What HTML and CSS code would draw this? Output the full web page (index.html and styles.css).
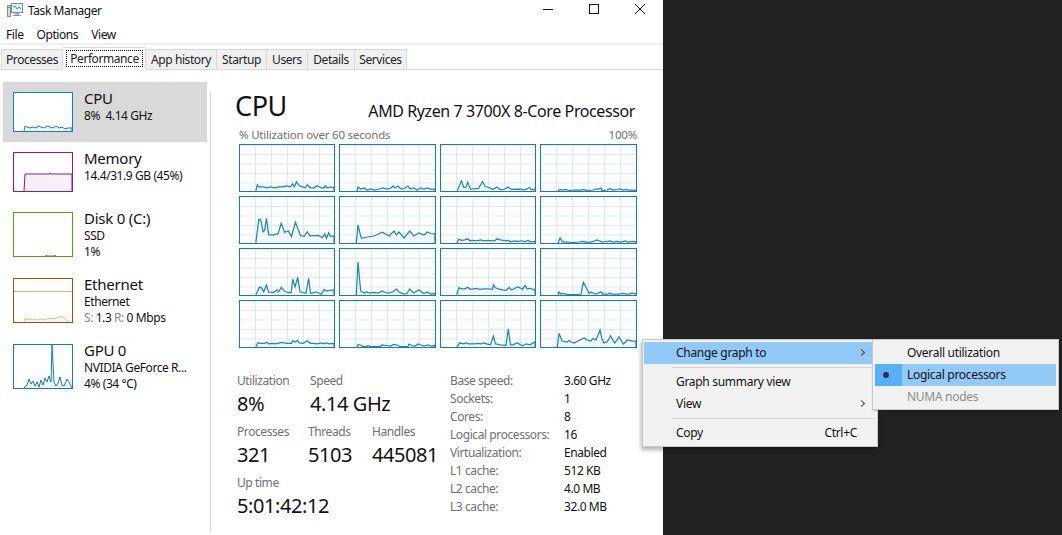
FILE: index.html
```html
<!DOCTYPE html>
<html lang="en">
<head>
  <meta charset="UTF-8" />
  <title>Task Manager</title>
  <link rel="stylesheet" href="styles.css">
</head>
<body>

<div class="window">
  <div class="titlebar">
    <svg class="app-icon" width="16" height="16" viewBox="0 0 16 16">
      <rect x="0.5" y="3.5" width="3" height="11" fill="#d4d8db" stroke="#858d94"/>
      <rect x="1" y="5" width="2" height="1" fill="#5fae4a"/>
      <rect x="4.5" y="1.5" width="11" height="9" fill="#e4f1fa" stroke="#7f8c96"/>
      <polyline points="6,5 8,4 10,7 12,5 14,7" fill="none" stroke="#2f8fd0"/>
      <rect x="8" y="11" width="4" height="2" fill="#a9b2b9"/>
      <rect x="6" y="13" width="8" height="1" fill="#8a949c"/>
    </svg>
    <span class="title">Task Manager</span>
    <div class="controls">
      <svg width="46" height="20" viewBox="0 0 46 20"><line x1="18" y1="9.5" x2="28" y2="9.5" stroke="#111"/></svg>
      <svg width="46" height="20" viewBox="0 0 46 20"><rect x="18.5" y="4.5" width="9" height="9" fill="none" stroke="#111"/></svg>
      <svg width="46" height="20" viewBox="0 0 46 20"><path d="M18 4 L28 14 M28 4 L18 14" stroke="#111" fill="none"/></svg>
    </div>
  </div>

  <div class="menubar">
    <span>File</span>
    <span>Options</span>
    <span>View</span>
  </div>

  <div class="tabs">
    <div class="tab t-processes">Processes</div>
    <div class="tab tab-active"><span class="focus">Performance</span></div>
    <div class="tab t-app">App history</div>
    <div class="tab t-startup">Startup</div>
    <div class="tab t-users">Users</div>
    <div class="tab t-details">Details</div>
    <div class="tab t-services">Services</div>
  </div>

  <div class="content">
    <div class="sidebar">
      <div class="res res-active">
        <svg class="thumb thumb-blue" viewBox="0 0 58 38"><polyline points="10,38 11,33 13,34 16,35 19,34 22,35 24,33 27,34 30,35 33,33 36,34 39,35 42,33 45,35 48,34 51,36 54,35 58,35 58,38"/></svg>
        <div class="res-text">
          <div class="res-name">CPU</div>
          <div class="res-sub">8%&nbsp; 4.14 GHz</div>
        </div>
      </div>
      <div class="res">
        <svg class="thumb thumb-purple" viewBox="0 0 58 38"><polyline points="10,38 11,21 35,21 36,20 37,21 58,21 58,38"/></svg>
        <div class="res-text">
          <div class="res-name">Memory</div>
          <div class="res-sub">14.4/31.9 GB (45%)</div>
        </div>
      </div>
      <div class="res res-tall">
        <svg class="thumb thumb-h thumb-green" viewBox="0 0 58 43"><polyline points="32,43 32,42 33,43 41,43 41,42 42,43"/></svg>
        <div class="res-text">
          <div class="res-name">Disk 0 (C:)</div>
          <div class="res-sub">SSD</div>
          <div class="res-sub">1%</div>
        </div>
      </div>
      <div class="res res-tall">
        <svg class="thumb thumb-h thumb-orange" viewBox="0 0 58 43">
          <line class="eth-line" x1="0" y1="12.5" x2="58" y2="12.5"/>
          <polyline points="10,43 11,39 13,41 15,40 18,41 21,40 24,41 27,40 30,41 33,40 36,39 39,40 42,39 45,38 47,37 50,39 52,41 54,43"/>
        </svg>
        <div class="res-text">
          <div class="res-name">Ethernet</div>
          <div class="res-sub">Ethernet</div>
          <div class="res-sub"><span class="dim">S:</span> 1.3 <span class="dim">R:</span> 0 Mbps</div>
        </div>
      </div>
      <div class="res res-tall">
        <svg class="thumb thumb-h thumb-blue" viewBox="0 0 58 43"><polyline points="10,43 13,40 15,34 17,39 19,36 21,41 23,37 25,42 27,35 29,40 31,33 33,37 35,31 37,37 38,0 40,37 42,41 44,38 46,32 48,40 50,41 53,34 55,37 58,43"/></svg>
        <div class="res-text">
          <div class="res-name">GPU 0</div>
          <div class="res-sub">NVIDIA GeForce R...</div>
          <div class="res-sub">4% (34 °C)</div>
        </div>
      </div>
    </div>
    <div class="divider"></div>

    <div class="main">
      <div class="main-head">
        <h1>CPU</h1>
        <div class="cpu-model">AMD Ryzen 7 3700X 8-Core Processor</div>
      </div>
      <div class="axis">
        <span>% Utilization over 60 seconds</span>
        <span>100%</span>
      </div>

      <div class="graphs">
        <svg class="graph" viewBox="0 0 95 46"><polyline points="16,46 17.5,40 19,42 24,42 27,43 31,42 35,43 39,42 43,42 47,41 51,42 53,39 55,42 57,37 60,41 63,42 66,43 68,40 71,43 75,43 78,41 82,43 85,43 86,41 88,43 92,42 95,43 95,46"/></svg>
        <svg class="graph" viewBox="0 0 95 46"><polyline points="17,46 18,42 21,44 24,43 27,45 31,44 35,45 39,44 43,43 47,44 51,43 53,41 55,43 58,41 60,43 62,44 65,43 68,41 70,44 74,43 77,45 81,43 84,44 87,43 90,44 95,44 95,46"/></svg>
        <svg class="graph" viewBox="0 0 95 46"><polyline points="16.3,46 20.7,36 23,42.7 25,42.7 27,37.3 29.7,44.3 38,43.7 42,36.7 44.7,42 49,42.7 52.3,44.7 56.3,42.3 60.3,45 64,44.5 68,42.3 71.3,44.7 79.7,44.3 84.7,45 89.7,42.7 91.3,45 95,44.3 95,46"/></svg>
        <svg class="graph" viewBox="0 0 95 46"><polyline points="17,46 19,44.5 22,45 25,44.5 28,45.5 32,45 36,45 40,45 43,44.5 46,45.5 52,45 54,44 57,44 60,43 61,45.5 66,45 69,43.5 72,45 76,44.5 79,44 82,45 85,44.5 88,45 91,45 95,45.5 95,46"/></svg>

        <svg class="graph" viewBox="0 0 95 46"><polyline points="16,46 19,22.3 21,23 23.3,35 25,33 26.7,21.3 29,38 34,38 38.3,37 41.7,26.3 45,35.3 49,34 52,39.7 56,25.3 59,33 61,38.7 64.7,39.5 68,35 70.7,39 79,38.5 83.3,40.7 85.7,37 87.3,41.5 89.7,36 91.3,39.5 95,39 95,46"/></svg>
        <svg class="graph" viewBox="0 0 95 46"><polyline points="16.3,46 18,28 20.7,39 21.7,41.3 27.3,40 34,39 42.3,35.3 49,39 54,34 56.3,38 59,35 64,41 69.7,34 73.7,39 78.7,36 84,38 87.3,35 90.7,36.5 95,37 95,46"/></svg>
        <svg class="graph" viewBox="0 0 95 46"><polyline points="16,46 18,42.5 21,43.5 24,43 27,42 29,44 33,43.5 36,44 40,43 43,44 47,43.5 52,44 54,44 57,42 60,43 63,43.5 66,44 68,43.5 70,45 74,44 78,44.5 82,44 85,45 88,43.5 90,45 95,44.5 95,46"/></svg>
        <svg class="graph" viewBox="0 0 95 46"><polyline points="17,46 19,41 21,44 23,45 27,45 32,45.5 38,45 42,44.5 45,45 50,45 53,44 56,43 59,44 61,45 65,44.5 69,44 72,45 76,44.5 80,45 84,44 87,45 91,44.5 95,45 95,46"/></svg>

        <svg class="graph" viewBox="0 0 95 46"><polyline points="16,46 19.7,38.3 21.7,39 24,43 26.7,36.3 29,43.3 34,43.5 37.3,41 39,43 41.7,38.5 45.7,43 51.7,44 53.3,30.3 55.7,38 58.3,28.3 60.7,43 66.7,44.5 69.3,29.3 71.3,44.5 77.3,43 82,45.5 85,40.5 87,42 95,41 95,46"/></svg>
        <svg class="graph" viewBox="0 0 95 46"><polyline points="16.3,46 18,13 20.7,42 24,44 26.7,43 30,44 34,43.5 38,44 42.3,42 45,43.5 49,44 53,42.5 56.3,40 59,43 64,45 67,44.5 69.7,40 73.7,44 78.7,41 84,44.5 87.3,43 91,45 95,44.5 95,46"/></svg>
        <svg class="graph" viewBox="0 0 95 46"><polyline points="16,46 18,39 21,40 24,40 27,38.5 29.7,40.5 33,40 36,39.5 39,40.5 43,40 47,40 52,40.5 53,36 55,39 58,40 62,41 66,41.5 69,38.5 71,41 74,40 77,38 80,39 82.3,40.5 85,36.5 87,40 90,39.5 95,41 95,46"/></svg>
        <svg class="graph" viewBox="0 0 95 46"><polyline points="17,46 18,43 20,45 23,44.5 26,45.5 36,45.5 40,45 42.3,33.3 45,38 48,44.5 50,43 53,44.5 55,45 57,44 60,43 62,45 67,45 69,44 71,45 78,45 82,44.5 86,45 88,45 91,44 95,45 95,46"/></svg>

        <svg class="graph" viewBox="0 0 95 46"><polyline points="16,46 18,42 22,42.5 25,42.5 27,41.5 29,43 33,42.5 36,43 40,42 43,41.5 47,42.5 52,42.5 53,40 56,41 58,39.5 60,42 64,42.5 68,40 71,42.5 75,42.5 78,43 82,42 85,43 87,42 90,43 95,42.5 95,46"/></svg>
        <svg class="graph" viewBox="0 0 95 46"><polyline points="17,46 18,43.5 20,44 23,45.5 27,45.5 28,44.5 30,45.5 40,45.5 42,44 46,44.5 50,45 54,43.5 57,44 60,45.5 68,45.5 69,43 72,44.5 75,45 78,43 81,44 84,45 88,44 91,45 95,44.5 95,46"/></svg>
        <svg class="graph" viewBox="0 0 95 46"><polyline points="16,46 19,42 23,43 26,42 28,43 33,43 37,42.5 41,43 43,42 46,43 50,44 53,35 55,43 60,44 65.7,44.5 68,28 70.3,44 73,44 77,42 82,45 86,43 90,44 95,41 95,46"/></svg>
        <svg class="graph" viewBox="0 0 95 46"><polyline points="16.3,46 18,32.3 21,40 26,41 28,39.5 30,41 33,42 37,40 43,37 46,39 49.7,40 52,37.5 55,39 59,29 61,38 63,42 66,41 69.7,35 73.7,42 78,36 82.3,43 86.3,39 91.3,40 95,40 95,46"/></svg>
      </div>

      <div class="details">
        <div class="stats">
          <div class="stat-row">
            <div class="stat s-util"><div class="stat-label">Utilization</div><div class="stat-value">8%</div></div>
            <div class="stat"><div class="stat-label">Speed</div><div class="stat-value">4.14 GHz</div></div>
          </div>
          <div class="stat-row">
            <div class="stat s-proc"><div class="stat-label">Processes</div><div class="stat-value">321</div></div>
            <div class="stat s-thr"><div class="stat-label">Threads</div><div class="stat-value">5103</div></div>
            <div class="stat"><div class="stat-label">Handles</div><div class="stat-value">445081</div></div>
          </div>
          <div class="stat-row">
            <div class="stat"><div class="stat-label">Up time</div><div class="stat-value">5:01:42:12</div></div>
          </div>
        </div>

        <div class="specs">
          <span class="spec-key">Base speed:</span><span>3.60 GHz</span>
          <span class="spec-key">Sockets:</span><span>1</span>
          <span class="spec-key">Cores:</span><span>8</span>
          <span class="spec-key">Logical processors:</span><span>16</span>
          <span class="spec-key">Virtualization:</span><span>Enabled</span>
          <span class="spec-key">L1 cache:</span><span>512 KB</span>
          <span class="spec-key">L2 cache:</span><span>4.0 MB</span>
          <span class="spec-key">L3 cache:</span><span>32.0 MB</span>
        </div>
      </div>
    </div>
  </div>
</div>

<div class="menu menu-main">
  <div class="menu-item menu-hot"><span>Change graph to</span><span class="arrow"></span></div>
  <div class="menu-sep"></div>
  <div class="menu-item"><span>Graph summary view</span></div>
  <div class="menu-item"><span>View</span><span class="arrow"></span></div>
  <div class="menu-sep"></div>
  <div class="menu-item"><span>Copy</span><span class="shortcut">Ctrl+C</span></div>
</div>

<div class="menu menu-sub">
  <div class="sub-item"><span class="bullet-cell"></span><span>Overall utilization</span></div>
  <div class="sub-item sub-hot"><span class="bullet-cell"><i class="bullet"></i></span><span>Logical processors</span></div>
  <div class="sub-item sub-off"><span class="bullet-cell"></span><span>NUMA nodes</span></div>
</div>

</body>
</html>
```

FILE: styles.css
```css
* {
  box-sizing: border-box;
}

html,
body {
  height: 100%;
}

body {
  margin: 0;
  position: relative;
  overflow: hidden;
  background: #212121;
  color: #111;
  font-family: "Noto Sans", "Open Sans", sans-serif;
  font-size: 12px;
  letter-spacing: -0.42px;
}

.window {
  width: 663px;
  height: 535px;
  background: #fff;
}

/* title + menu */
.titlebar {
  display: flex;
  align-items: center;
  height: 22px;
  padding: 0 0 2px 7px;
}

.app-icon {
  margin-right: 5px;
}

.title {
  flex: 1;
}

.controls {
  display: flex;
}

.menubar {
  display: flex;
  gap: 13px;
  height: 23px;
  padding: 4px 0 0 6px;
  border-bottom: 2px solid #f0f0f0;
}

/* tabs */
.tabs {
  display: flex;
  align-items: flex-end;
  height: 25px;
  padding-left: 1px;
  border-bottom: 1px solid #d9d9d9;
}

.tab {
  height: 21px;
  margin-bottom: -1px;
  padding-top: 2px;
  line-height: 16px;
  text-align: center;
  background: #f0f0f0;
  border: 1px solid #d9d9d9;
  border-left: 0;
  color: #222;
}

.t-processes { width: 62px; border-left: 1px solid #d9d9d9; }
.t-app { width: 71px; }
.t-startup { width: 50px; }
.t-users { width: 41px; }
.t-details { width: 47px; }
.t-services { width: 52px; }

.tab-active {
  width: 83px;
  height: 23px;
  padding: 2px 2px 2px 3px;
  background: #fff;
  border-bottom-color: #fff;
}

.focus {
  display: block;
  height: 17px;
  line-height: 15px;
  border: 1px dotted #000;
}

/* left column */
.content {
  display: flex;
  padding-top: 12px;
}

.sidebar {
  width: 210px;
  padding-left: 3px;
}

.divider {
  width: 1px;
  height: 441px;
  margin-top: 10px;
  background: #d9d9d9;
}

.res {
  display: flex;
  width: 204px;
  height: 60px;
  padding: 10px 0 0 10px;
}

.res-tall {
  height: 66px;
}

.res-active {
  background: #d9d9d9;
}

.thumb {
  width: 60px;
  height: 40px;
  flex: none;
  border: 1px solid;
  background: #fff;
}

.thumb-h {
  height: 45px;
}

.thumb polyline {
  stroke-width: 1;
}

.thumb-blue { border-color: #117dbb; }
.thumb-blue polyline { fill: #f1f6fa; stroke: #117dbb; }
.thumb-purple { border-color: #8b12ae; }
.thumb-purple polyline { fill: #f4f2f4; stroke: #8b12ae; }
.thumb-green { border-color: #4da60c; }
.thumb-green polyline { fill: #eff7e8; stroke: #4da60c; }
.thumb-orange { border-color: #a74f01; }
.thumb-orange polyline { fill: #fdf8f3; stroke: #eeb48f; }

.eth-line {
  stroke: #dfac88;
}

.res-text {
  margin: -4px 0 0 11px;
}

.res-name {
  font-size: 15px;
  line-height: 20px;
  letter-spacing: -0.25px;
}

.res-sub {
  line-height: 16px;
  white-space: nowrap;
}

.dim {
  color: #888;
}

/* right column */
.main {
  width: 402px;
  padding: 7px 0 0 24px;
}

.main-head {
  display: flex;
  justify-content: space-between;
  align-items: flex-end;
  width: 400px;
  height: 33px;
}

h1 {
  margin: 0;
  font-size: 27px;
  font-weight: 400;
  line-height: 33px;
}

.cpu-model {
  font-size: 16px;
  line-height: 22px;
  letter-spacing: -0.4px;
}

.axis {
  display: flex;
  justify-content: space-between;
  width: 402px;
  height: 22px;
  padding: 6px 0 0 4px;
  line-height: 14px;
  font-size: 11.5px;
  color: #707070;
  letter-spacing: -0.2px;
}

.graphs {
  display: grid;
  grid-template-columns: 96px 97px 96px 97px;
  grid-auto-rows: 48px;
  gap: 4px;
  margin-left: 4px;
}

.graph {
  width: 100%;
  height: 48px;
  border: 1px solid #117dbb;
  background-color: #fff;
  background-image:
    linear-gradient(90deg, #d9eaf4 1px, transparent 1px),
    linear-gradient(#d9eaf4 1px, transparent 1px);
  background-size: 16px 100%, 100% 9.5px;
  background-position: 15px 0, 0 9px;
}

.graph polyline {
  fill: #f1f6fa;
  fill-opacity: 0.85;
  stroke: #1c84c0;
  stroke-width: 1.25;
}

.details {
  display: flex;
  margin-top: 25px;
}

.stats {
  width: 215px;
  padding-left: 2px;
}

.stat-row {
  display: flex;
  height: 51px;
}

.s-util { width: 73px; }
.s-proc { width: 71px; }
.s-thr { width: 64px; }

.stat-label {
  height: 17px;
  line-height: 16px;
  color: #707070;
}

.stat-value {
  font-size: 20px;
  line-height: 28px;
  white-space: nowrap;
}

.specs {
  display: grid;
  grid-template-columns: 114px 1fr;
  grid-auto-rows: 18px;
  line-height: 16px;
}

.spec-key {
  color: #707070;
}

/* context menu */
.menu {
  position: absolute;
  top: 339px;
  background: #f2f2f2;
  border: 1px solid #c8c8c8;
  letter-spacing: -0.3px;
}

.menu-main {
  left: 642px;
  width: 236px;
  height: 108px;
  padding: 2px 1px 0;
  box-shadow: -1px 3px 4px rgba(0, 0, 0, 0.3);
}

.menu-item {
  display: flex;
  justify-content: space-between;
  align-items: center;
  height: 22px;
  padding: 0 10px 1px 32px;
}

.menu-hot {
  background: #91c9f7;
}

.arrow {
  width: 5px;
  height: 5px;
  border-top: 1px solid #444;
  border-right: 1px solid #444;
  transform: rotate(45deg);
  margin-right: 2px;
}

.shortcut {
  margin-right: 9px;
}

.menu-sep {
  height: 1px;
  margin: 3px 1px 3px 28px;
  background: #d5d5d5;
}

.menu-sub {
  left: 872px;
  width: 187px;
  height: 71px;
  padding: 2px 2px 0;
  box-shadow: 1px 1px 2px rgba(0, 0, 0, 0.2);
}

.sub-item {
  display: flex;
  align-items: center;
  height: 22px;
  padding-bottom: 1px;
}

.bullet-cell {
  display: flex;
  align-items: center;
  width: 32px;
  height: 22px;
  padding-left: 8px;
  flex: none;
}

.sub-hot {
  background: #91c9f7;
  padding-bottom: 0;
}

.sub-hot > span:last-child {
  margin-bottom: 1px;
}

.sub-hot .bullet-cell {
  width: 27px;
  margin-right: 5px;
  background: #56b0fa;
}

.bullet {
  width: 6px;
  height: 6px;
  border-radius: 50%;
  background: #333;
}

.sub-off {
  color: #8c8c8c;
}
```
